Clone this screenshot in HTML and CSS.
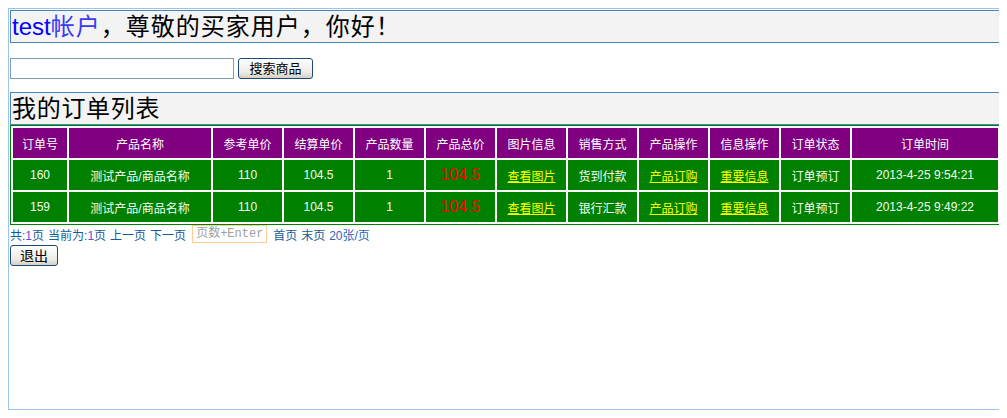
FILE: index.html
```html
<!DOCTYPE html>
<html lang="zh-CN">
<head>
<meta charset="utf-8">
<title>我的订单列表</title>
<link rel="stylesheet" href="styles.css">
</head>
<body>
<div class="frame">
  <div class="titlebox greeting"><span class="user">test</span><span class="acct">帐户</span>，尊敬的买家用户，你好！</div>
  <form class="search">
    <input class="search-input" type="text">
    <button class="btn btn-search" type="button">搜索商品</button>
  </form>
  <div class="titlebox list-title">我的订单列表</div>
  <table class="orders">
    <colgroup>
      <col class="c-id"><col class="c-name"><col class="c-std"><col class="c-std"><col class="c-std"><col class="c-std"><col class="c-std"><col class="c-std"><col class="c-std"><col class="c-std"><col class="c-std"><col class="c-time">
    </colgroup>
    <thead>
      <tr>
        <th>订单号</th><th>产品名称</th><th>参考单价</th><th>结算单价</th><th>产品数量</th><th>产品总价</th><th>图片信息</th><th>销售方式</th><th>产品操作</th><th>信息操作</th><th>订单状态</th><th>订单时间</th>
      </tr>
    </thead>
    <tbody>
      <tr>
        <td>160</td><td>测试产品/商品名称</td><td>110</td><td>104.5</td><td>1</td><td class="total">104.5</td><td><a href="#">查看图片</a></td><td>货到付款</td><td><a href="#">产品订购</a></td><td><a href="#">重要信息</a></td><td>订单预订</td><td>2013-4-25 9:54:21</td>
      </tr>
      <tr>
        <td>159</td><td>测试产品/商品名称</td><td>110</td><td>104.5</td><td>1</td><td class="total">104.5</td><td><a href="#">查看图片</a></td><td>银行汇款</td><td><a href="#">产品订购</a></td><td><a href="#">重要信息</a></td><td>订单预订</td><td>2013-4-25 9:49:22</td>
      </tr>
    </tbody>
  </table>
  <div class="pager">
    <span>共:<span class="num">1</span>页</span>
    <span>当前为:<span class="num">1</span>页</span>
    <span>上一页</span>
    <span>下一页</span>
    <input class="page-input" type="text" placeholder="页数+Enter">
    <span>首页</span>
    <span>末页</span>
    <span class="per">20张/页</span>
  </div>
  <button class="btn btn-exit" type="button">退出</button>
</div>
</body>
</html>
```
FILE: styles.css
```css
html, body {
  overflow: hidden;
}

body {
  margin: 8px;
  font-family: "Liberation Sans", "Noto Sans CJK SC", sans-serif;
  font-size: 12px;
  color: #000;
  background: #fff;
}

.frame {
  box-sizing: border-box;
  width: 995px;
  height: 402px;
  padding: 1px;
  border: 1px solid #9cc4e8;
}

.titlebox {
  box-sizing: border-box;
  width: 991px;
  height: 33px;
  line-height: 31px;
  border: 1px solid #4a86b8;
  background: #f3f3f3;
  font-size: 24px;
  padding-left: 1px;
  color: #000;
  white-space: nowrap;
  overflow: hidden;
}

.greeting { letter-spacing: 1px; }
.greeting .user { letter-spacing: 0; }
.list-title { letter-spacing: 0.7px; }

.user { color: #0000ff; }
.acct { color: #3a3af0; }

.search {
  margin: 15px 0 13px 0;
  display: flex;
  align-items: center;
  gap: 4px;
  height: 21px;
}

.search-input {
  box-sizing: border-box;
  width: 224px;
  height: 21px;
  margin: 0;
  padding: 1px 2px;
  border: 1px solid #7f9db9;
  background: #fff;
}

.btn {
  box-sizing: border-box;
  margin: 0;
  padding: 0;
  border: 1px solid #1c4a7a;
  border-radius: 3px;
  background: linear-gradient(#ffffff, #ecebe6 70%, #d6d0c5);
  color: #000;
  font-family: "Liberation Sans", "Noto Sans CJK SC", sans-serif;
  line-height: 1;
}

.btn-search {
  width: 75px;
  height: 21px;
  font-size: 13px;
}

.orders {
  width: 991px;
  table-layout: fixed;
  border-collapse: separate;
  border-spacing: 2px;
  border: 1px solid #008000;
  margin: 0;
}

.c-id { width: 54px; }
.c-name { width: 142px; }
.c-std { width: 69px; }
.c-time { width: 146px; }

.orders th,
.orders td {
  height: 30px;
  padding: 0;
  text-align: center;
  vertical-align: middle;
  font-weight: normal;
  font-size: 12px;
  color: #fff;
  white-space: nowrap;
  overflow: hidden;
}

.orders th { background: #800080; }
.orders td { background: #008000; color: #f2fff0; }

.orders td.total {
  color: #ff0000;
  font-size: 16px;
}

.orders a {
  color: #ffff00;
  text-decoration: underline;
}

.pager {
  display: flex;
  align-items: center;
  gap: 4px;
  height: 18px;
  color: #135c96;
  font-size: 12px;
  white-space: nowrap;
}

.pager .num { color: #6a4ad0; }
.pager .per { color: #2a64b8; }

.page-input {
  box-sizing: border-box;
  width: 75px;
  height: 18px;
  margin: 0 2px;
  padding: 0 3px;
  border: 1px solid #ffcc99;
  font-family: "Liberation Mono", "Noto Sans CJK SC", monospace;
  font-size: 12px;
  color: #999;
}

.page-input::placeholder { color: #a0a0a0; }

.btn-exit {
  display: block;
  width: 48px;
  height: 21px;
  margin-top: 2px;
  font-size: 14px;
}
```
